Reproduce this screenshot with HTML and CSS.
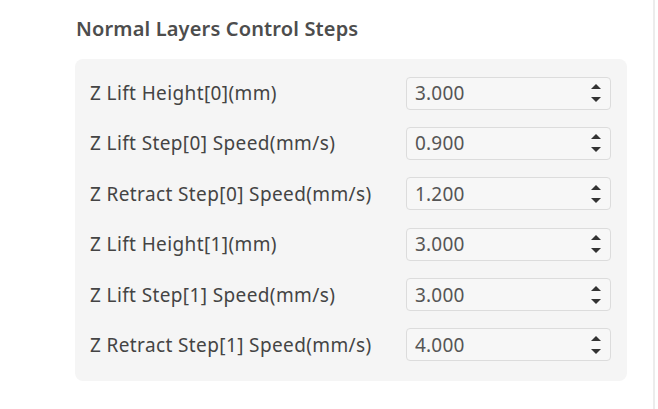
FILE: index.html
```html
<!DOCTYPE html>
<html lang="en">
<head>
  <meta charset="UTF-8" />
  <title>Normal Layers Control Steps</title>
  <link rel="stylesheet" href="styles.css">
</head>
<body>
  <div class="page">
    <h3 class="section-title">Normal Layers Control Steps</h3>
    <div class="panel">
      <div class="row">
        <label>Z Lift Height[0](mm)</label>
        <div class="spin"><span class="value">3.000</span><span class="arrows"><i class="up"></i><i class="down"></i></span></div>
      </div>
      <div class="row">
        <label>Z Lift Step[0] Speed(mm/s)</label>
        <div class="spin"><span class="value">0.900</span><span class="arrows"><i class="up"></i><i class="down"></i></span></div>
      </div>
      <div class="row">
        <label>Z Retract Step[0] Speed(mm/s)</label>
        <div class="spin"><span class="value">1.200</span><span class="arrows"><i class="up"></i><i class="down"></i></span></div>
      </div>
      <div class="row">
        <label>Z Lift Height[1](mm)</label>
        <div class="spin"><span class="value">3.000</span><span class="arrows"><i class="up"></i><i class="down"></i></span></div>
      </div>
      <div class="row">
        <label>Z Lift Step[1] Speed(mm/s)</label>
        <div class="spin"><span class="value">3.000</span><span class="arrows"><i class="up"></i><i class="down"></i></span></div>
      </div>
      <div class="row">
        <label>Z Retract Step[1] Speed(mm/s)</label>
        <div class="spin"><span class="value">4.000</span><span class="arrows"><i class="up"></i><i class="down"></i></span></div>
      </div>
    </div>
  </div>
</body>
</html>
```

FILE: styles.css
```css
body {
  margin: 0;
  font-family: 'Noto Sans', 'Open Sans', sans-serif;
  background: #fff;
  color: #444;
}

.page {
  width: 655px;
  height: 409px;
  border-right: 2px solid #ececec;
  padding: 15px 0 0 75px;
  box-sizing: border-box;
}

.section-title {
  margin: 0 0 16px 1px;
  font-size: 20px;
  font-weight: 600;
  line-height: 28px;
  letter-spacing: 0.15px;
  color: #4d4d4d;
}

.panel {
  width: 552px;
  background: #f5f5f5;
  border-radius: 8px;
  padding: 17px 16px 19px 15px;
  box-sizing: border-box;
  display: flex;
  flex-direction: column;
  gap: 16.4px;
}

.row {
  display: flex;
  align-items: center;
  justify-content: space-between;
  height: 34px;
}

.row label {
  font-size: 19px;
  letter-spacing: 0.38px;
  color: #444;
}

.spin {
  width: 205px;
  height: 33px;
  box-sizing: border-box;
  border: 1px solid #dcdcdc;
  border-radius: 4px;
  background: #f7f7f7;
  display: flex;
  align-items: center;
  justify-content: space-between;
  padding: 0 9px 0 8px;
}

.value {
  font-size: 19px;
  letter-spacing: 0.2px;
  color: #555;
}

.arrows {
  display: flex;
  flex-direction: column;
  gap: 8px;
}

.arrows i {
  width: 0;
  height: 0;
  border-left: 5px solid transparent;
  border-right: 5px solid transparent;
}

.arrows .up {
  border-bottom: 5px solid #333;
}

.arrows .down {
  border-top: 5px solid #333;
}
```
